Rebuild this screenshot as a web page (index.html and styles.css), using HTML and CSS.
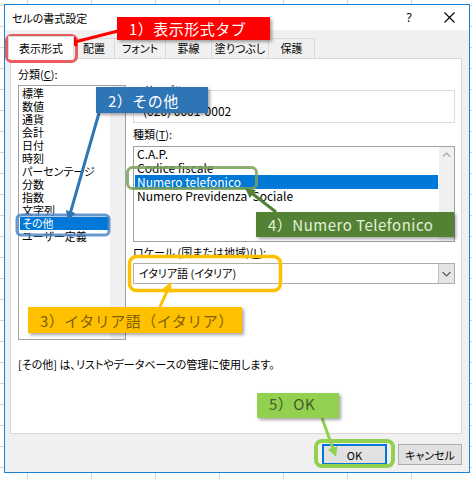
FILE: index.html
```html
<!DOCTYPE html>
<html lang="ja">
<head>
<meta charset="utf-8">
<title>セルの書式設定</title>
<link rel="stylesheet" href="styles.css">
</head>
<body>
<div class="dialog">
  <div class="titlebar">
    <span class="title">セルの書式設定</span>
    <span class="help">?</span>
    <span class="close"><svg width="11" height="11" viewBox="0 0 11 11"><path d="M0.5 0.5 L10.5 10.5 M10.5 0.5 L0.5 10.5" stroke="#000" stroke-width="1.1" fill="none"/></svg></span>
  </div>
  <div class="client">
    <div class="tabs">
      <div class="tab active">表示形式</div>
      <div class="tab w41">配置</div>
      <div class="tab w51">フォント</div>
      <div class="tab w46">罫線</div>
      <div class="tab w57">塗りつぶし</div>
      <div class="tab w46">保護</div>
    </div>
    <div class="panel">
      <div class="cols">
        <div class="col-left">
          <div class="label">分類(<u>C</u>):</div>
          <div class="listbox cat">
            <ul class="items">
              <li>標準</li>
              <li>数値</li>
              <li>通貨</li>
              <li>会計</li>
              <li>日付</li>
              <li>時刻</li>
              <li>パーセンテージ</li>
              <li>分数</li>
              <li>指数</li>
              <li>文字列</li>
              <li class="sel">その他</li>
              <li>ユーザー定義</li>
            </ul>
            <div class="vscroll">
              <svg width="15" height="15" viewBox="0 0 15 15"><path d="M4 9 L7.5 5.5 L11 9" stroke="#d0d0d0" stroke-width="1" fill="none"/></svg>
              <svg width="15" height="15" viewBox="0 0 15 15"><path d="M4 6 L7.5 9.5 L11 6" stroke="#d0d0d0" stroke-width="1" fill="none"/></svg>
            </div>
          </div>
        </div>
        <div class="col-right">
          <fieldset class="sample">
            <legend>サンプル</legend>
            <div class="sample-text">(020) 0001-0002</div>
          </fieldset>
          <div class="label gap4">種類(<u>T</u>):</div>
          <div class="listbox types">
            <ul class="items latin">
              <li>C.A.P.</li>
              <li>Codice fiscale</li>
              <li class="sel">Numero telefonico</li>
              <li>Numero Previdenza&nbsp; Sociale</li>
            </ul>
            <div class="vscroll">
              <svg width="15" height="15" viewBox="0 0 15 15"><path d="M4 9.5 L7.5 6 L11 9.5" stroke="#a6a6a6" stroke-width="1.2" fill="none"/></svg>
              <svg width="15" height="15" viewBox="0 0 15 15"><path d="M4 6 L7.5 9.5 L11 6" stroke="#a6a6a6" stroke-width="1.2" fill="none"/></svg>
            </div>
          </div>
          <div class="label gap3">ロケール (国または地域)(<u>L</u>):</div>
          <div class="combo">
            <span class="combo-text">イタリア語 (イタリア)</span>
            <span class="dropbtn"><svg width="9" height="6" viewBox="0 0 9 6"><path d="M0.5 1 L4.5 5 L8.5 1" stroke="#555" stroke-width="1.1" fill="none"/></svg></span>
          </div>
        </div>
      </div>
      <p class="desc">[その他] は、リストやデータベースの管理に使用します。</p>
    </div>
    <div class="buttons">
      <button class="btn default">OK</button>
      <button class="btn">キャンセル</button>
    </div>
  </div>
</div>

<svg class="marks" width="472" height="479" viewBox="0 0 472 479">
  <defs>
    <marker id="ar" markerUnits="userSpaceOnUse" markerWidth="10" markerHeight="10" viewBox="0 0 10 10" refX="1" refY="5" orient="auto"><path d="M0,0 L10,5 L0,10 z" fill="#ff0000"/></marker>
    <marker id="ab" markerUnits="userSpaceOnUse" markerWidth="10" markerHeight="10" viewBox="0 0 10 10" refX="1" refY="5" orient="auto"><path d="M0,0 L10,5 L0,10 z" fill="#2e75b6"/></marker>
    <marker id="ay" markerUnits="userSpaceOnUse" markerWidth="10" markerHeight="10" viewBox="0 0 10 10" refX="1" refY="5" orient="auto"><path d="M0,0 L10,5 L0,10 z" fill="#ffc000"/></marker>
    <marker id="ag" markerUnits="userSpaceOnUse" markerWidth="10" markerHeight="10" viewBox="0 0 10 10" refX="1" refY="5" orient="auto"><path d="M0,0 L10,5 L0,10 z" fill="#548235"/></marker>
    <marker id="al" markerUnits="userSpaceOnUse" markerWidth="10" markerHeight="10" viewBox="0 0 10 10" refX="1" refY="5" orient="auto"><path d="M0,0 L10,5 L0,10 z" fill="#92d050"/></marker>
  </defs>
  <rect x="6.5" y="35.5" width="70" height="26" rx="5" fill="none" stroke="#e84a4f" stroke-width="3" opacity="0.9"/>
  <rect x="17" y="215" width="92" height="20" rx="4" fill="none" stroke="#4f86c6" stroke-width="3" opacity="0.85"/>
  <rect x="129.5" y="256.5" width="151" height="34" rx="7" fill="none" stroke="#ffc000" stroke-width="3.5"/>
  <rect x="127.5" y="167.5" width="129" height="21" rx="5" fill="none" stroke="#7ba05b" stroke-width="3" opacity="0.85"/>
  <rect x="316" y="441" width="77" height="25" rx="6" fill="none" stroke="#92d050" stroke-width="4"/>

  <line x1="118" y1="31" x2="75.7" y2="41.8" stroke="#ff0000" stroke-width="3" marker-end="url(#ar)"/>
  <line x1="99" y1="113" x2="70.5" y2="212.4" stroke="#2e75b6" stroke-width="3" marker-end="url(#ab)"/>
  <line x1="160" y1="307" x2="167.4" y2="290.2" stroke="#ffc000" stroke-width="3" marker-end="url(#ay)"/>
  <line x1="276" y1="212" x2="252.1" y2="193.5" stroke="#548235" stroke-width="3" marker-end="url(#ag)"/>
  <line x1="322" y1="418" x2="333" y2="448.5" stroke="#92d050" stroke-width="3" marker-end="url(#al)"/>
</svg>

<div class="callout c1">1）表示形式タブ</div>
<div class="callout c2">2）その他</div>
<div class="callout c3">3）イタリア語（イタリア）</div>
<div class="callout c4">4）Numero Telefonico</div>
<div class="callout c5">5）OK</div>
</body>
</html>
```
FILE: styles.css
```css
* { box-sizing: border-box; }
html, body { margin: 0; padding: 0; }
body {
  width: 472px;
  height: 479px;
  overflow: hidden;
  position: relative;
  background-color: #ffffff;
  background-image:
    linear-gradient(to right, #d4d4d4 1px, transparent 1px),
    linear-gradient(to bottom, #d4d4d4 1px, transparent 1px);
  background-size: 64px 21px;
  background-position: 27px 0, 0 5px;
  font-family: "Noto Sans CJK JP", sans-serif;
  font-feature-settings: "palt";
  font-size: 11px;
  color: #000;
}

.dialog {
  margin: 4px 0 0 4px;
  width: 466px;
  height: 469px;
  border: 1px solid #1883d7;
  background: #f0f0f0;
  display: flex;
  flex-direction: column;
}

.titlebar {
  flex: none;
  height: 25px;
  background: #fff;
  display: flex;
  align-items: center;
}
.title { flex: 1; padding-left: 7px; font-size: 11px; }
.help {
  width: 40px;
  text-align: center;
  font-family: "Noto Sans", sans-serif;
  font-size: 12px;
}
.close {
  width: 40px;
  display: flex;
  justify-content: center;
  align-items: center;
}

.client { flex: 1; display: flex; flex-direction: column; }

.tabs {
  flex: none;
  height: 28px;
  padding-left: 5px;
  display: flex;
  align-items: flex-end;
}
.tab {
  height: 20px;
  line-height: 18px;
  text-align: center;
  background: #f0f0f0;
  border-top: 1px solid #d9d9d9;
  border-right: 1px solid #d9d9d9;
  font-size: 11px;
}
.tab.active {
  position: relative;
  z-index: 1;
  width: 66px;
  height: 23px;
  margin-left: -2px;
  margin-bottom: -1px;
  line-height: 22px;
  background: #fff;
  border: 1px solid #d9d9d9;
  border-bottom: none;
}
.w41 { width: 41px; }
.w46 { width: 46px; }
.w51 { width: 51px; }
.w57 { width: 57px; }

.panel {
  flex: none;
  height: 376px;
  margin: 0 7px 0 5px;
  border: 1px solid #d9d9d9;
  background: #fff;
  padding: 8px 6px 0 7px;
}
.cols { display: flex; align-items: flex-start; }
.col-left { width: 108px; flex: none; }
.col-right {
  width: 322px;
  flex: none;
  margin-left: 7px;
  padding-top: 16px;
}
.label { height: 15px; line-height: 15px; white-space: nowrap; }
.col-left .label { margin-bottom: 3px; }
.gap4 { margin-top: 4px; }
.gap3 { margin-top: 3px; }

.listbox {
  display: flex;
  border: 1px solid #a0a0a0;
  background: #fff;
}
.listbox.cat { height: 255px; }
.listbox.types { height: 96px; margin-top: 4px; }
.items {
  flex: 1;
  list-style: none;
  margin: 0;
  padding: 1px 1px 0 1px;
  overflow: hidden;
}
.items li {
  height: 13px;
  line-height: 13px;
  padding-left: 2px;
  white-space: nowrap;
}
.items li.sel { background: #0078d7; color: #fff; }
.items.latin { padding: 0 1px 0 1px; }
.items.latin li {
  height: 14px;
  line-height: 14px;
  font-size: 12px;
  font-feature-settings: normal;
}
.vscroll {
  width: 15px;
  flex: none;
  background: #f0f0f0;
  display: flex;
  flex-direction: column;
  justify-content: space-between;
}
.vscroll svg { display: block; }

.sample {
  margin: 0;
  min-width: 0;
  height: 40px;
  border: 1px solid #dcdcdc;
  padding: 4px 9px 0;
}
.sample legend {
  padding: 0 1px;
  height: 15px;
  line-height: 15px;
  font-size: 11px;
}
.sample-text {
  line-height: 18px;
  font-size: 12px;
  font-feature-settings: normal;
}

.combo {
  margin-top: 3px;
  height: 21px;
  border: 1px solid #adadad;
  display: flex;
  background: #fff;
}
.combo-text { flex: 1; padding-left: 5px; line-height: 19px; }
.dropbtn {
  width: 16px;
  flex: none;
  background: #e5e5e5;
  border-left: 1px solid #c4c4c4;
  display: flex;
  align-items: center;
  justify-content: center;
}

.desc {
  margin: 17px 0 0;
  height: 15px;
  line-height: 15px;
  white-space: nowrap;
}

.buttons {
  margin-top: 10px;
  padding-right: 7px;
  display: flex;
  justify-content: flex-end;
  gap: 11px;
}
.btn {
  height: 21px;
  width: 64px;
  padding: 0;
  background: #e1e1e1;
  border: 1px solid #adadad;
  font-family: "Noto Sans CJK JP", sans-serif;
  font-feature-settings: "palt";
  font-size: 11px;
  color: #000;
}
.btn.default {
  width: 65px;
  border: 2px solid #0078d7;
}

.marks {
  position: absolute;
  left: 0;
  top: 0;
  pointer-events: none;
}

.callout {
  position: absolute;
  display: flex;
  align-items: center;
  padding-left: 12px;
  font-size: 15px;
  letter-spacing: 0.5px;
  font-feature-settings: normal;
  white-space: nowrap;
  box-shadow: 2px 2px 3px rgba(0, 0, 0, 0.35);
}
.c1 { left: 117px; top: 17px; width: 153px; height: 23px; background: #ff0000; color: #fff; }
.c2 { left: 96px; top: 87px; width: 112px; height: 26px; background: #2e75b6; color: #fff; }
.c3 { left: 28px; top: 307px; width: 214px; height: 26px; background: #ffc000; color: #7f6000; }
.c4 { left: 256px; top: 212px; width: 198px; height: 25px; background: #548235; color: #e2f0d9; }
.c5 { left: 257px; top: 393px; width: 82px; height: 25px; background: #92d050; color: #45592e; padding-bottom: 4px; }
```
